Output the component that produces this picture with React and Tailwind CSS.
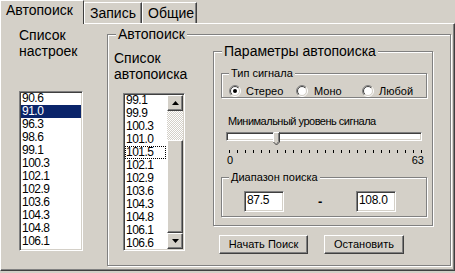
import React from 'react';

const sunken =
  'border border-t-[#808080] border-l-[#808080] border-r-white border-b-white shadow-[inset_1px_1px_0_#404040,inset_-1px_-1px_0_#d4d0c8]';
const raised =
  'border border-t-white border-l-white border-r-[#404040] border-b-[#404040] shadow-[inset_-1px_-1px_0_#808080]';
const etched = 'border border-[#808080] shadow-[inset_1px_1px_0_#fff,1px_1px_0_#fff]';

const presets = ['90.6', '91.0', '96.3', '98.6', '99.1', '100.3', '102.1', '102.9', '103.6', '104.3', '104.8', '106.1'];
const found = ['99.1', '99.9', '100.3', '101.0', '101.5', '102.1', '102.9', '103.6', '104.3', '104.8', '106.1', '106.6'];

const Arrow = ({ down }) => (
  <svg width="7" height="4" viewBox="0 0 7 4">
    <path d={down ? 'M0 0h7L3.5 4z' : 'M3.5 0L7 4H0z'} fill="#000" />
  </svg>
);

const Radio = ({ id, checked }) => (
  <svg width="12" height="12" viewBox="0 0 12 12" className="shrink-0">
    <defs>
      <linearGradient id={`o${id}`} x1="0" y1="0" x2="1" y2="1">
        <stop offset="0.5" stopColor="#808080" />
        <stop offset="0.5" stopColor="#ffffff" />
      </linearGradient>
      <linearGradient id={`i${id}`} x1="0" y1="0" x2="1" y2="1">
        <stop offset="0.5" stopColor="#404040" />
        <stop offset="0.5" stopColor="#d4d0c8" />
      </linearGradient>
    </defs>
    <circle cx="6" cy="6" r="5.5" fill="none" stroke={`url(#o${id})`} />
    <circle cx="6" cy="6" r="4.5" fill="#fff" stroke={`url(#i${id})`} />
    {checked && <circle cx="6" cy="6" r="2" fill="#000" />}
  </svg>
);

const Label = ({ children, big }) => (
  <div
    className={`w-fit bg-[#d4d0c8] px-[2px] ${
      big ? '-mt-[9px] ml-[8px] text-[14px] leading-[16px]' : '-mt-[7px] ml-[7px] text-[11px] leading-[13px]'
    }`}
  >
    {children}
  </div>
);

const Tab = ({ children, active, w }) =>
  active ? (
    <div className={`relative z-10 -mb-[1px] h-[24px] ${w} border-t border-l border-white border-r border-r-[#404040] bg-[#d4d0c8] pl-[5px] pt-[1px] text-[14px] leading-[16px]`}>
      {children}
    </div>
  ) : (
    <div className={`h-[21px] ${w} border-t border-l border-white border-r border-r-[#404040] shadow-[inset_-1px_0_0_#808080] pl-[5px] pt-[2px] text-[14px] leading-[16px]`}>
      {children}
    </div>
  );

export default function App() {
  return (
    <div className="h-[273px] w-[455px] overflow-hidden bg-[#d4d0c8] font-['Liberation_Sans',Arial,sans-serif] text-black">
      {/* tabs */}
      <div className="flex h-[23px] items-end">
        <Tab active w="w-[84px]">Автопоиск</Tab>
        <Tab w="w-[58px]">Запись</Tab>
        <Tab w="w-[55px]">Общие</Tab>
      </div>

      {/* page */}
      <div className="flex h-[248px] w-[455px] border border-t-white border-l-white border-r-[#404040] border-b-[#404040] shadow-[inset_-1px_-1px_0_#808080]">
        {/* presets */}
        <div className="w-[106px] shrink-0 pl-[18px] pt-[3px]">
          <div className="text-[14px] leading-[16px]">
            Список
            <br />
            настроек
          </div>
          <div className={`mt-[32px] h-[160px] w-[64px] bg-white ${sunken}`}>
            <div className="px-[1px]">
              {presets.map((f) => (
                <div
                  key={f}
                  className={`h-[13px] pl-[1px] text-[12px] leading-[13px] tracking-[-0.5px] ${
                    f === '91.0' ? 'bg-[#0a246a] text-white' : ''
                  }`}
                >
                  {f}
                </div>
              ))}
            </div>
          </div>
        </div>

        {/* Автопоиск group */}
        <div className={`mt-[10px] h-[232px] w-[344px] shrink-0 ${etched}`}>
          <Label big>Автопоиск</Label>
          <div className="flex">
            <div className="w-[105px] shrink-0">
              <div className="mt-[8px] pl-[6px] text-[14px] leading-[16px]">
                Список
                <br />
                автопоиска
              </div>
              <div className={`ml-[15px] mt-[11px] flex h-[158px] w-[62px] overflow-hidden bg-white ${sunken}`}>
                <div className="flex-1 overflow-hidden px-[1px]">
                  {found.map((f) => (
                    <div
                      key={f}
                      className={`h-[13px] text-[12px] leading-[11px] tracking-[-0.5px] ${
                        f === '101.5' ? 'border border-dotted border-black' : 'border border-transparent'
                      }`}
                    >
                      {f}
                    </div>
                  ))}
                </div>
                {/* scrollbar */}
                <div className="my-[1px] mr-[1px] flex w-[16px] flex-col">
                  <div className={`flex h-[16px] items-center justify-center bg-[#d4d0c8] ${raised}`}>
                    <Arrow />
                  </div>
                  <div className="h-[29px] bg-[repeating-conic-gradient(#d4d0c8_0_25%,#ffffff_0_50%)] bg-[length:2px_2px]" />
                  <div className={`flex-1 bg-[#d4d0c8] ${raised}`} />
                  <div className={`flex h-[16px] items-center justify-center bg-[#d4d0c8] ${raised}`}>
                    <Arrow down />
                  </div>
                </div>
              </div>
            </div>

            <div className="flex-1">
              {/* Параметры автопоиска */}
              <div className={`mt-[9px] h-[175px] w-[220px] ${etched}`}>
                <Label big>Параметры автопоиска</Label>

                <div className={`ml-[7px] mt-[14px] h-[25px] w-[206px] ${etched}`}>
                  <Label>Тип сигнала</Label>
                  <div className="ml-[7px] mt-[5px] flex h-[12px] items-center text-[11px] leading-[13px]">
                    <div className="flex w-[67px] items-center gap-[5px]">
                      <Radio id="a" checked />
                      <span>Стерео</span>
                    </div>
                    <div className="flex w-[66px] items-center gap-[6px]">
                      <Radio id="b" />
                      <span>Моно</span>
                    </div>
                    <div className="flex items-center gap-[5px]">
                      <Radio id="c" />
                      <span>Любой</span>
                    </div>
                  </div>
                </div>

                <div className="ml-[14px] mt-[17px] text-[11px] leading-[13px] tracking-[-0.5px]">
                  Минимальный уровень сигнала
                </div>

                {/* trackbar */}
                <div className="relative ml-[12px] mt-[4px] h-[15px] w-[196px]">
                  <div className={`mt-[3px] h-[9px] bg-white ${sunken}`} />
                  <svg width="7" height="14" viewBox="0 0 7 14" className="absolute left-[47px] top-0">
                    <path d="M0.5 0.5h6v9.5l-3 3l-3-3z" fill="#d4d0c8" stroke="#404040" />
                    <path d="M0.5 10V0.5h5.5" fill="none" stroke="#fff" />
                    <path d="M5.5 1v8.6l-2 2" fill="none" stroke="#808080" />
                  </svg>
                </div>
                <svg width="200" height="4" className="ml-[12px] mt-[3px] block">
                  {Array.from({ length: 25 }, (_, i) => (
                    <rect key={i} x={3 + i * 8} y="0" width="1" height="3" fill="#000" />
                  ))}
                </svg>
                <div className="ml-[13px] flex w-[197px] justify-between text-[11px] leading-[13px]">
                  <span>0</span>
                  <span>63</span>
                </div>

                {/* Диапазон поиска */}
                <div className={`ml-[7px] mt-[10px] h-[40px] w-[206px] ${etched}`}>
                  <Label>Диапазон поиска</Label>
                  <div className="mt-[7px] flex items-center text-[12px] leading-[13px]">
                    <div className={`ml-[22px] h-[21px] w-[40px] bg-white pl-[2px] pt-[2px] tracking-[-0.3px] ${sunken}`}>87.5</div>
                    <div className="ml-[34px] w-[6px] text-[13px] font-bold">-</div>
                    <div className={`ml-[32px] h-[21px] w-[40px] bg-white pl-[2px] pt-[2px] tracking-[-0.3px] ${sunken}`}>108.0</div>
                  </div>
                </div>
              </div>

              {/* buttons */}
              <div className="ml-[6px] mt-[9px] flex gap-[16px] text-[11px]">
                <button className={`flex h-[19px] w-[89px] items-center justify-center bg-[#d4d0c8] ${raised}`}>Начать Поиск</button>
                <button className={`flex h-[19px] w-[80px] items-center justify-center bg-[#d4d0c8] ${raised}`}>Остановить</button>
              </div>
            </div>
          </div>
        </div>
      </div>
    </div>
  );
}
